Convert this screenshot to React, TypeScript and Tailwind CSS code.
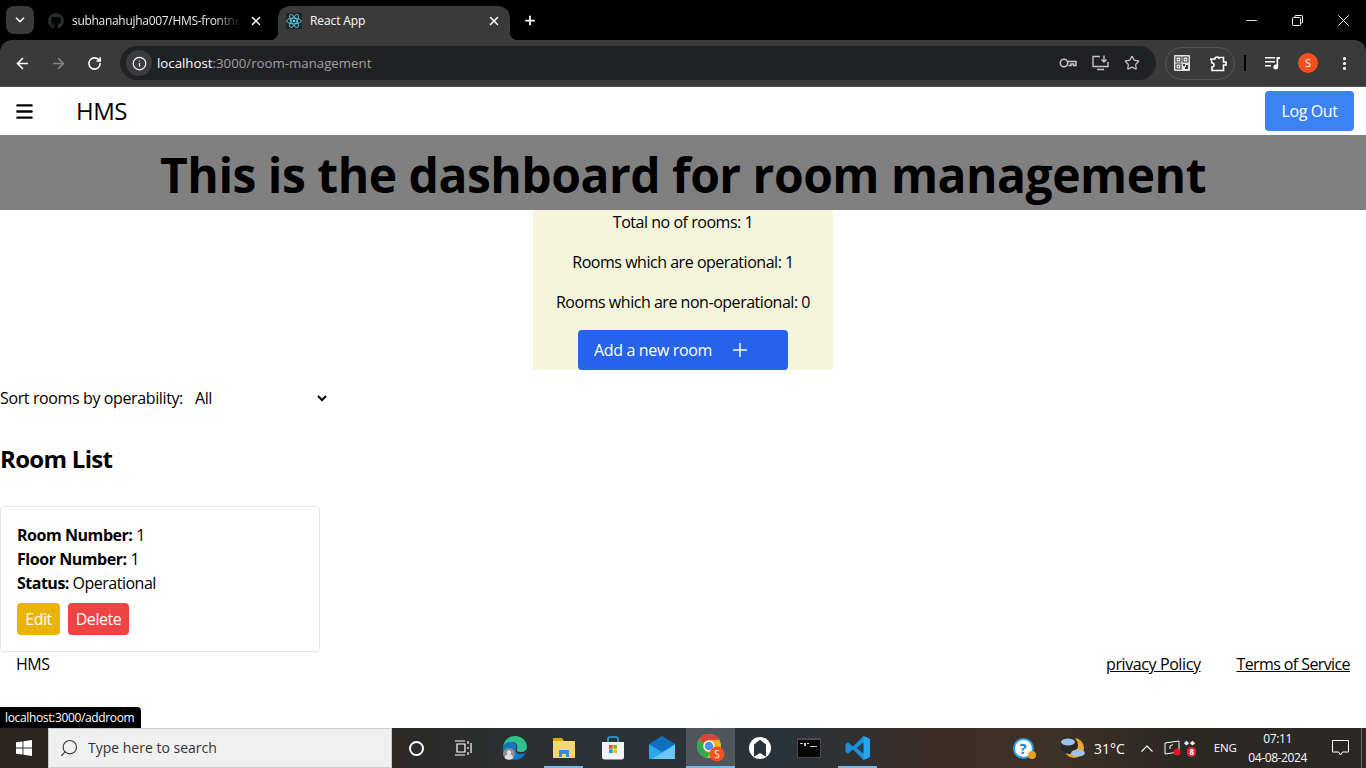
import { ArrowLeft, ArrowRight, RotateCw, Info, X, Plus, ChevronDown, Star, Search, Minus, MoreVertical, Menu } from "lucide-react";
import { FaGithub } from "react-icons/fa";

function ReactLogo() {
  return (
    <svg width="16" height="16" viewBox="-12 -12 24 24" fill="none" stroke="#61dafb" strokeWidth="1.2">
      <circle r="2" fill="#61dafb" stroke="none" />
      <ellipse rx="11" ry="4.2" />
      <ellipse rx="11" ry="4.2" transform="rotate(60)" />
      <ellipse rx="11" ry="4.2" transform="rotate(120)" />
    </svg>
  );
}

function TabBar() {
  return (
    <div className="flex h-10 items-end bg-black text-xs text-white">
      <div className="mb-1.5 ml-1.5 flex h-7 w-7 items-center justify-center rounded-lg bg-[#3a3a3a]">
        <ChevronDown size={14} strokeWidth={3} />
      </div>
      <div className="ml-1.5 flex h-[34px] w-[238px] items-center pb-1 pl-[8px]">
        <div className="w-6 text-[#2a2f36]">
          <FaGithub size={16} />
        </div>
        <div className="w-[168px] overflow-hidden whitespace-nowrap tracking-[-0.3px] text-[#e8e8e8] [mask-image:linear-gradient(90deg,#000_85%,transparent)]">subhanahujha007/HMS-frontne</div>
        <X size={14} strokeWidth={2.5} className="ml-[9px]" />
      </div>
      <div className="relative flex h-[34px] w-[232px] items-center rounded-t-xl bg-[#3a3a3a] pb-1 pl-[8px] pr-[9px]">
        <div className="absolute bottom-0 -left-2 h-2 w-2 bg-[radial-gradient(circle_at_0_0,transparent_8px,#3a3a3a_8.5px)]" />
        <div className="absolute bottom-0 -right-2 h-2 w-2 bg-[radial-gradient(circle_at_100%_0,transparent_8px,#3a3a3a_8.5px)]" />
        <div className="flex h-4 w-4 items-center justify-center bg-[#22262b]">
          <ReactLogo />
        </div>
        <div className="ml-2 flex-1 tracking-[-0.1px]">React App</div>
        <X size={14} strokeWidth={2.5} />
      </div>
      <div className="mb-[10px] ml-[13px] flex h-5 w-[14px] items-center">
        <Plus size={15} strokeWidth={3} />
      </div>
      <div className="mb-[6px] ml-auto flex h-7 items-center">
        <div className="flex w-[46px] justify-center">
          <Minus size={17} strokeWidth={1.2} />
        </div>
        <div className="flex w-[46px] justify-center">
          <svg width="11" height="11" viewBox="0 0 11 11" fill="none" stroke="white">
            <rect x="0.5" y="2.5" width="8" height="8" rx="1" />
            <path d="M3 2.5V1.2a.7.7 0 0 1 .7-.7h6a.7.7 0 0 1 .8.7v6.1a.7.7 0 0 1-.7.7H8.5" />
          </svg>
        </div>
        <div className="flex w-[46px] justify-center">
          <svg width="11" height="11" viewBox="0 0 11 11" stroke="white" strokeWidth="1">
            <path d="M0.3 0.3 10.7 10.7M10.7 0.3 0.3 10.7" />
          </svg>
        </div>
      </div>
    </div>
  );
}

function Toolbar() {
  return (
    <div className="bg-black">
      <div className="flex h-[47px] items-center rounded-t-xl border-b border-[#555555] bg-[#3a3a3a] text-white">
        <div className="flex w-[120px] items-center">
          <div className="flex w-[44px] justify-center">
            <ArrowLeft size={17} strokeWidth={2.3} />
          </div>
          <div className="flex w-[28px] justify-center text-[#858585]">
            <ArrowRight size={17} strokeWidth={2.3} />
          </div>
          <div className="flex w-[44px] justify-center">
            <RotateCw size={15} strokeWidth={2.5} />
          </div>
        </div>
        <div className="flex h-[34px] w-[1036px] items-center rounded-full bg-[#202124] pl-1.5 pr-4">
          <div className="flex h-[26px] w-[26px] items-center justify-center rounded-full bg-[#3a3b3e]">
            <Info size={15} strokeWidth={2} />
          </div>
          <div className="ml-[5px] flex-1 pt-px text-[13.25px] text-[#a0a0a0]">
            <span className="text-white">localhost</span>:3000/room-management
          </div>
          <div className="flex items-center gap-[15px] text-[#c6c6c6]">
            <svg width="18" height="12" viewBox="0 0 18 12" fill="none" stroke="currentColor" strokeWidth="1.5">
              <circle cx="5" cy="6" r="3.7" />
              <path d="M9 4.5h8v4h-2.5V7H12v1.5H9.5" />
            </svg>
            <svg width="17" height="16" viewBox="0 0 17 16" fill="none" stroke="currentColor" strokeWidth="1.4">
              <path d="M8 1.5H1v10h15V7M5 14.5h7" />
              <path d="M12 0.5v6M9.5 4.5 12 7l2.5-2.5" />
            </svg>
            <Star size={16} strokeWidth={1.8} />
          </div>
        </div>
        <div className="ml-[9px] flex h-[33px] w-[70px] items-center rounded-full border border-[#555555] pl-[8px]">
          <svg width="16" height="16" viewBox="0 0 16 16">
            <rect width="16" height="16" rx="1" fill="#e4e4e4" />
            <path d="M2 2h5v5H2zM9 2h5v5H9zM2 9h5v5H2z" fill="none" stroke="#444" strokeWidth="1.2" />
            <path d="M4 4h1v1H4zM11 4h1v1h-1zM4 11h1v1H4zM9 9h2v2H9zM12 10h2v4h-3v-2h1z" fill="#333" />
          </svg>
          <svg className="ml-[20px]" width="17" height="17" viewBox="0 0 17 17" fill="none" stroke="white" strokeWidth="1.6">
            <path d="M1 4h4a2 2 0 0 1 4 0V2.5h4.500V7h2.500v3h-2.500v5.500H2V12a2 2 0 0 0 0-4z" />
          </svg>
        </div>
        <div className="ml-[9px] h-4 w-0.5 bg-black" />
        <div className="ml-[19px] w-4">
          <svg width="16" height="14" viewBox="0 0 16 14" fill="white">
            <path d="M0 1h10v1.500H0zM0 5h10v1.500H0zM0 9h6v1.500H0z" />
            <path d="M11.500 1H15v2h-1.800v8a2.400 2.400 0 1 1-1.700-2.300z" />
          </svg>
        </div>
        <div className="ml-[17px] flex h-5 w-5 items-center justify-center rounded-full bg-[#f4511e] text-[11px]">S</div>
        <div className="ml-[14px] flex w-6 justify-center">
          <MoreVertical size={17} strokeWidth={2.5} />
        </div>
      </div>
    </div>
  );
}

function EdgeIcon() {
  return (
    <svg width="26" height="26" viewBox="0 0 26 26">
      <path d="M1 12C2 5 7 1 13 1c7 0 12 5 12 11 0 3-3 5-6 5-3 0-5-1-4-3 1-2 0-7-5-7-5 0-8 3-9 5z" fill="#2fc28f" />
      <path d="M1 12c2-4 5-5 8-5 5 0 6 4 5 7-1 4 3 5 5 5 2 0 4-1 5-2-2 5-6 8-11 8-7 0-13-5-12-13z" fill="#1277c4" />
      <circle cx="7" cy="19" r="6" fill="#8e8e8e" />
      <circle cx="7" cy="17.500" r="2.200" fill="#e0e0e0" />
      <path d="M3 23c0-3 2-4 4-4s4 1 4 4a6 6 0 0 1-8 0z" fill="#e0e0e0" />
    </svg>
  );
}

function FolderIcon() {
  return (
    <svg width="24" height="22" viewBox="0 0 24 22">
      <path d="M1 1h9l2 3h-11z" fill="#d9a21f" />
      <rect x="1" y="4" width="22" height="17" fill="#f7d774" />
      <path d="M7 20v-7h10v7h-3v-3h-4v3z" fill="#2d8fe0" />
    </svg>
  );
}

function StoreIcon() {
  return (
    <svg width="24" height="24" viewBox="0 0 24 24">
      <path d="M7 6V3a2 2 0 0 1 2-2h6a2 2 0 0 1 2 2v3" fill="none" stroke="#2aa8e0" strokeWidth="1.600" />
      <path d="M1 6h22v15a2.500 2.500 0 0 1-2.500 2.500h-17A2.500 2.500 0 0 1 1 21z" fill="#f4f4f4" />
      <rect x="8" y="9" width="3.700" height="3.700" fill="#f25022" />
      <rect x="12.300" y="9" width="3.700" height="3.700" fill="#7fba00" />
      <rect x="8" y="13.300" width="3.700" height="3.700" fill="#00a4ef" />
      <rect x="12.300" y="13.300" width="3.700" height="3.700" fill="#ffb900" />
    </svg>
  );
}

function MailIcon() {
  return (
    <svg width="26" height="24" viewBox="0 0 26 24">
      <path d="M0 8 13 0l13 8v15H0z" fill="#0f6fc0" />
      <path d="M0 8h26v15H0z" fill="#29a8ea" />
      <path d="M0 8h26L13 16z" fill="#0f6fc0" />
      <path d="M26 9v14H3z" fill="#6cc9f3" />
    </svg>
  );
}

function ChromeIcon() {
  return (
    <svg width="28" height="28" viewBox="0 0 28 28">
      <circle cx="12" cy="12" r="12" fill="#e8b518" />
      <path d="M12 0a12 12 0 0 1 10.400 6H12a6 6 0 0 0-5.500 3.500L2 5A12 12 0 0 1 12 0z" fill="#dc4437" />
      <path d="M2 5a12 12 0 0 0 8 18.800L14 18a6 6 0 0 1-7.500-8z" fill="#31a853" />
      <circle cx="12" cy="12" r="5.500" fill="#fff" />
      <circle cx="12" cy="12" r="4.300" fill="#4e8ff0" />
      <circle cx="20" cy="20" r="7.500" fill="#f4511e" />
      <text x="20" y="23.500" textAnchor="middle" fontSize="10" fill="#fff" fontFamily="Open Sans, sans-serif">S</text>
    </svg>
  );
}

function TerminalIcon() {
  return (
    <svg width="24" height="20" viewBox="0 0 24 20">
      <rect width="24" height="20" fill="#4a4a4a" />
      <rect x="1" y="2" width="22" height="17" fill="#050505" />
      <path d="M3 5h3v1H3zM7 5h2v3H7zM10 5h2v1h-2zM13 8h7v1h-7z" fill="#c8c8c8" />
    </svg>
  );
}

function VsCodeIcon() {
  return (
    <svg width="26" height="26" viewBox="0 0 26 26">
      <path d="M18.500 1 25 4v18l-6.500 3L8 14.500 3 18.500l-2.500-1.500v-8L3 7.500l5 4z" fill="#1c8fdc" />
      <path d="M18.500 1 25 4v18l-6.500 3z" fill="#2aa4ee" />
      <path d="M18.500 7.500 11.500 13l7 5.500z" fill="#2b3a44" />
    </svg>
  );
}

function TaskItem({ children, active, open }: { children: React.ReactNode; active?: boolean; open?: boolean }) {
  return (
    <div className={`relative flex h-10 w-[49px] items-center justify-center ${active ? "bg-[#50565b]" : ""}`}>
      {children}
      {open && <div className="absolute bottom-0 left-[5px] right-[5px] h-0.5 bg-[#76b9ed]" />}
      {active && <div className="absolute bottom-0 left-0 right-0 h-0.5 bg-[#76b9ed]" />}
    </div>
  );
}

function Taskbar() {
  return (
    <div className="flex h-10 items-center bg-[linear-gradient(90deg,#2c2622_0%,#2b2a28_30%,#2b3238_45%,#2a3339_58%,#3a2c27_68%,#3f3327_76%,#2c2824_86%,#2b2724_100%)] text-white">
      <div className="flex h-10 w-12 items-center justify-center">
        <svg width="16" height="16" viewBox="0 0 16 16" fill="white">
          <path d="M0 2.300 6.500 1.400v6.200H0zM7.400 1.300 16 0v7.600H7.400zM0 8.400h6.500v6.200L0 13.700zM7.400 8.400H16V16l-8.600-1.300z" />
        </svg>
      </div>
      <div className="flex h-10 w-[344px] items-center border border-[#c9c9c9] bg-[#f0f0f0] pl-[10px] text-sm text-[#333333]">
        <Search size={20} strokeWidth={1.3} className="-scale-x-100" />
        <span className="ml-[9px]">Type here to search</span>
      </div>
      <div className="flex h-10 w-12 items-center justify-center">
        <div className="h-[15px] w-[15px] rounded-full border-2 border-white" />
      </div>
      <div className="mr-1 flex h-10 w-[46px] items-center justify-center">
        <svg width="18" height="16" viewBox="0 0 18 16" fill="none" stroke="white" strokeWidth="1.200">
          <path d="M1 1h10M1 15h10M3 4h8v8H3zM14 1v3M14 7v2M14 12v3M17 3v10" />
        </svg>
      </div>
      <TaskItem><EdgeIcon /></TaskItem>
      <TaskItem open><FolderIcon /></TaskItem>
      <TaskItem><StoreIcon /></TaskItem>
      <TaskItem><MailIcon /></TaskItem>
      <TaskItem active><ChromeIcon /></TaskItem>
      <TaskItem>
        <svg width="24" height="24" viewBox="0 0 24 24" fill="none" stroke="white">
          <circle cx="12" cy="12" r="11" fill="white" stroke="none" />
          <path d="M7 19V9l5-4 5 4v10l-5-3z" fill="#2b3238" stroke="#2b3238" strokeWidth="2" />
        </svg>
      </TaskItem>
      <TaskItem><TerminalIcon /></TaskItem>
      <TaskItem open><VsCodeIcon /></TaskItem>
      <div className="ml-[121px] flex h-10 w-[40px] items-center justify-center">
        <div className="relative flex h-[21px] w-[21px] items-center justify-center rounded-full border-2 border-[#2f9fe8] bg-white text-[15px] font-bold text-[#1c7fd0]">
          ?
          <div className="absolute -bottom-0.5 -right-1 h-2 w-2 rounded-full bg-[#f0a020]" />
        </div>
      </div>
      <div className="ml-[18px] flex items-center">
        <svg width="26" height="22" viewBox="0 0 26 22">
          <circle cx="13" cy="11" r="10" fill="#f0a428" />
          <circle cx="8" cy="8" r="9" fill="#2c2824" />
          <ellipse cx="7" cy="5" rx="7" ry="3.500" fill="#9fc2e8" />
          <ellipse cx="17" cy="16" rx="7" ry="3.500" fill="#9fc2e8" />
        </svg>
        <span className="ml-[7px] text-[14px]">31°C</span>
      </div>
      <div className="ml-[16px] w-3">
        <svg width="12" height="7" viewBox="0 0 12 7" fill="none" stroke="white" strokeWidth="1.200">
          <path d="M0.500 6.500 6 1l5.500 5.500" />
        </svg>
      </div>
      <div className="ml-[11px]">
        <svg width="17" height="16" viewBox="0 0 17 16" fill="none" stroke="white">
          <path d="M1 3 15 1v11L1 14z" />
          <path d="M6 9V6l3-1.500" />
          <circle cx="13" cy="12" r="3.500" fill="#e81123" stroke="none" />
        </svg>
      </div>
      <div className="relative ml-[3px] flex h-[18px] w-[16px] items-end justify-center">
        <div className="absolute left-0 top-0 text-[7px] leading-[8px] tracking-[1px] text-white">⬥⬥</div>
        <div className="flex h-[10px] w-[9px] items-center justify-center rounded-sm bg-[#d9263a] text-[8px] font-bold">8</div>
      </div>
      <span className="ml-[14px] text-[11.5px] tracking-[-0.2px]">ENG</span>
      <div className="ml-[8px] flex w-[66px] flex-col items-center whitespace-nowrap text-xs leading-[19px] tracking-[-0.4px]">
        <span>07:11</span>
        <span>04-08-2024</span>
      </div>
      <div className="ml-[21px]">
        <svg width="17" height="16" viewBox="0 0 17 16" fill="none" stroke="white" strokeWidth="1">
          <path d="M0.500 0.500h16v11.500h-6l-2 3-2-3h-6z" />
        </svg>
      </div>
      <div className="ml-[12px] h-10 w-px bg-[#6b6b6b]" />
    </div>
  );
}

export default function App() {
  return (
    <div className="flex h-screen flex-col overflow-hidden bg-white font-['Open_Sans',sans-serif] text-black">
      <TabBar />
      <Toolbar />

      <main className="relative flex-1 overflow-hidden">
        <nav className="flex h-12 items-center justify-between pl-[14px] pr-3">
          <div className="flex items-center">
            <Menu size={21} strokeWidth={2.8} />
            <span className="ml-[41px] text-2xl tracking-[-0.5px]">HMS</span>
          </div>
          <button className="flex h-10 w-[89px] items-center justify-center rounded-sm bg-[#3b82f6] tracking-[-0.4px] text-white">Log Out</button>
        </nav>

        <h1 className="flex h-[75px] items-center justify-center bg-[#808080] pt-1 text-5xl font-bold tracking-[-0.5px]">
          This is the dashboard for room management
        </h1>

        <section className="mx-auto flex h-40 w-[300px] flex-col items-center bg-[#f5f5dc] tracking-[-0.47px]">
          <p className="h-6">Total no of rooms: 1</p>
          <p className="mt-4 h-6">Rooms which are operational: 1</p>
          <p className="mt-4 h-6">Rooms which are non-operational: 0</p>
          <button className="mt-4 flex h-10 w-[210px] items-center rounded-sm bg-[#2563eb] pl-4 tracking-[-0.35px] text-white">
            Add a new room
            <Plus size={22} strokeWidth={1.6} className="ml-[17px]" />
          </button>
        </section>

        <div className="mt-4 flex h-6 items-center tracking-[-0.38px]">
          <label>Sort rooms by operability:</label>
          <select className="ml-[8px] h-6 w-[139px] bg-white">
            <option>All</option>
          </select>
        </div>

        <h2 className="mt-[33px] h-8 text-2xl leading-8 font-bold tracking-[-0.7px]">Room List</h2>

        <div className="mt-[31px] h-[146px] w-80 rounded border border-gray-200 p-4 tracking-[-0.45px]">
          <p className="h-6"><b>Room Number:</b> 1</p>
          <p className="h-6"><b>Floor Number:</b> 1</p>
          <p className="h-6 tracking-[-0.5px]"><b>Status:</b> Operational</p>
          <div className="mt-2 flex gap-2">
            <button className="h-8 w-[43px] rounded-sm bg-[#eab308] text-white">Edit</button>
            <button className="h-8 w-[61px] rounded-sm bg-[#ef4444] text-white">Delete</button>
          </div>
        </div>

        <footer className="flex h-6 items-center justify-between px-4 tracking-[-0.47px]">
          <span>HMS</span>
          <div className="flex gap-9">
            <a className="tracking-[-0.4px] underline">privacy Policy</a>
            <a className="tracking-[-0.6px] underline">Terms of Service</a>
          </div>
        </footer>

        <div className="absolute bottom-0 left-0 flex h-[21px] w-[141px] items-center rounded-tr bg-black pl-[5px] text-xs tracking-[-0.35px] text-white">
          localhost:3000/addroom
        </div>
      </main>

      <Taskbar />
    </div>
  );
}
